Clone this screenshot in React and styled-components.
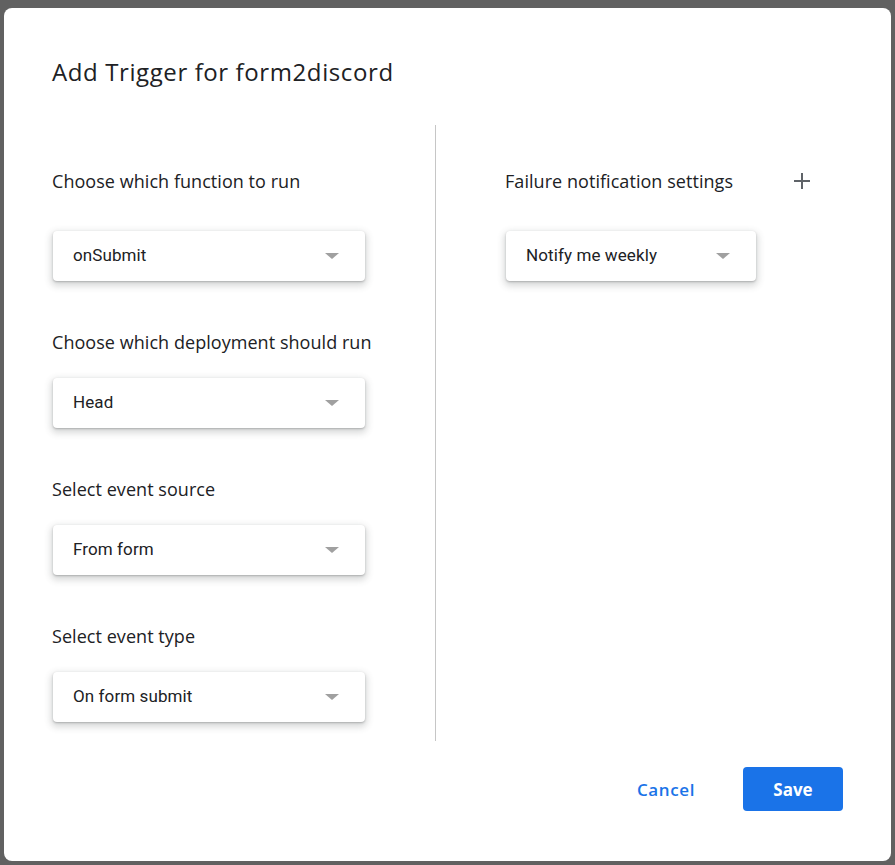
import React from "react";
import styled, { createGlobalStyle } from "styled-components";

const GlobalStyle = createGlobalStyle`
  html, body {
    margin: 0;
    padding: 0;
    background: #616161;
  }
  * {
    box-sizing: border-box;
  }
`;

const Backdrop = styled.div`
  width: 895px;
  height: 865px;
  padding: 8px 4px 4px 4px;
  display: flex;
`;

const Dialog = styled.div`
  flex: 1;
  background: #fff;
  border-radius: 8px;
  padding: 44px 48px 50px 48px;
  display: flex;
  flex-direction: column;
  font-family: "Open Sans", "Liberation Sans", sans-serif;
`;

const Title = styled.h2`
  margin: 0;
  font-family: "Open Sans", sans-serif;
  font-weight: 500;
  font-size: 24px;
  letter-spacing: 0.6px;
  line-height: 40px;
  color: #202124;
`;

const Body = styled.div`
  display: flex;
  margin-top: 33px;
  height: 616px;
`;

const Column = styled.div`
  width: ${(p) => p.$width}px;
  padding-left: ${(p) => p.$inset || 0}px;
  padding-top: 42px;
  display: flex;
  flex-direction: column;
`;

const Divider = styled.div`
  width: 1px;
  background: #c6c6c6;
`;

const Field = styled.div`
  display: flex;
  flex-direction: column;
  margin-bottom: 47px;
`;

const LabelRow = styled.div`
  display: flex;
  align-items: center;
  justify-content: space-between;
  height: 28px;
  margin-bottom: ${(p) => p.$gap}px;
`;

const Label = styled.div`
  font-size: 18px;
  color: #202124;
  letter-spacing: 0.05px;
`;

const PlusButton = styled.div`
  width: 16px;
  height: 16px;
  margin-right: 1px;
  color: #5f6368;
  display: flex;
  align-items: center;
  justify-content: center;
`;

const Select = styled.div`
  width: ${(p) => p.$width}px;
  height: 50px;
  margin-left: 1px;
  background: #fff;
  border-radius: 4px;
  box-shadow: 0 1px 2px rgba(60, 64, 67, 0.3), 0 3px 7px 2px rgba(60, 64, 67, 0.2);
  display: flex;
  align-items: center;
  justify-content: space-between;
  padding: 0 26px 2px 20px;
  font-family: Roboto, "Liberation Sans", sans-serif;
  font-size: 17px;
  letter-spacing: 0.1px;
  color: #202124;
`;

const Caret = styled.span`
  width: 0;
  height: 0;
  margin-top: 2px;
  border-left: 7px solid transparent;
  border-right: 7px solid transparent;
  border-top: 6px solid #a0a0a0;
`;

const Footer = styled.div`
  margin-top: auto;
  display: flex;
  justify-content: flex-end;
  align-items: center;
  gap: 48px;
`;

const TextButton = styled.button`
  border: none;
  background: none;
  padding: 0;
  font-family: "Open Sans", sans-serif;
  font-weight: 600;
  font-size: 17px;
  letter-spacing: 0.6px;
  color: #1a73e8;
`;

const PrimaryButton = styled.button`
  width: 100px;
  height: 44px;
  border: none;
  border-radius: 4px;
  background: #1a73e8;
  color: #fff;
  font-family: "Open Sans", sans-serif;
  font-weight: 700;
  font-size: 17px;
`;

const PlusIcon = () => (
  <svg width="16" height="16" viewBox="0 0 16 16">
    <path d="M8 0v16M0 8h16" stroke="currentColor" strokeWidth="2" />
  </svg>
);

const leftFields = [
  { label: "Choose which function to run", value: "onSubmit", gap: 36 },
  { label: "Choose which deployment should run", value: "Head", gap: 22 },
  { label: "Select event source", value: "From form", gap: 22 },
  { label: "Select event type", value: "On form submit", gap: 22 },
];

const App = () => {
  return (
    <>
      <GlobalStyle />
      <Backdrop>
        <Dialog>
          <Title>Add Trigger for form2discord</Title>
          <Body>
            <Column $width={383}>
              {leftFields.map((f) => (
                <Field key={f.label}>
                  <LabelRow $gap={f.gap}>
                    <Label>{f.label}</Label>
                  </LabelRow>
                  <Select $width={312}>
                    {f.value}
                    <Caret />
                  </Select>
                </Field>
              ))}
            </Column>
            <Divider />
            <Column $width={375} $inset={69}>
              <Field>
                <LabelRow $gap={36}>
                  <Label>Failure notification settings</Label>
                  <PlusButton>
                    <PlusIcon />
                  </PlusButton>
                </LabelRow>
                <Select $width={250}>
                  Notify me weekly
                  <Caret />
                </Select>
              </Field>
            </Column>
          </Body>
          <Footer>
            <TextButton>Cancel</TextButton>
            <PrimaryButton>Save</PrimaryButton>
          </Footer>
        </Dialog>
      </Backdrop>
    </>
  );
};

export default App;
